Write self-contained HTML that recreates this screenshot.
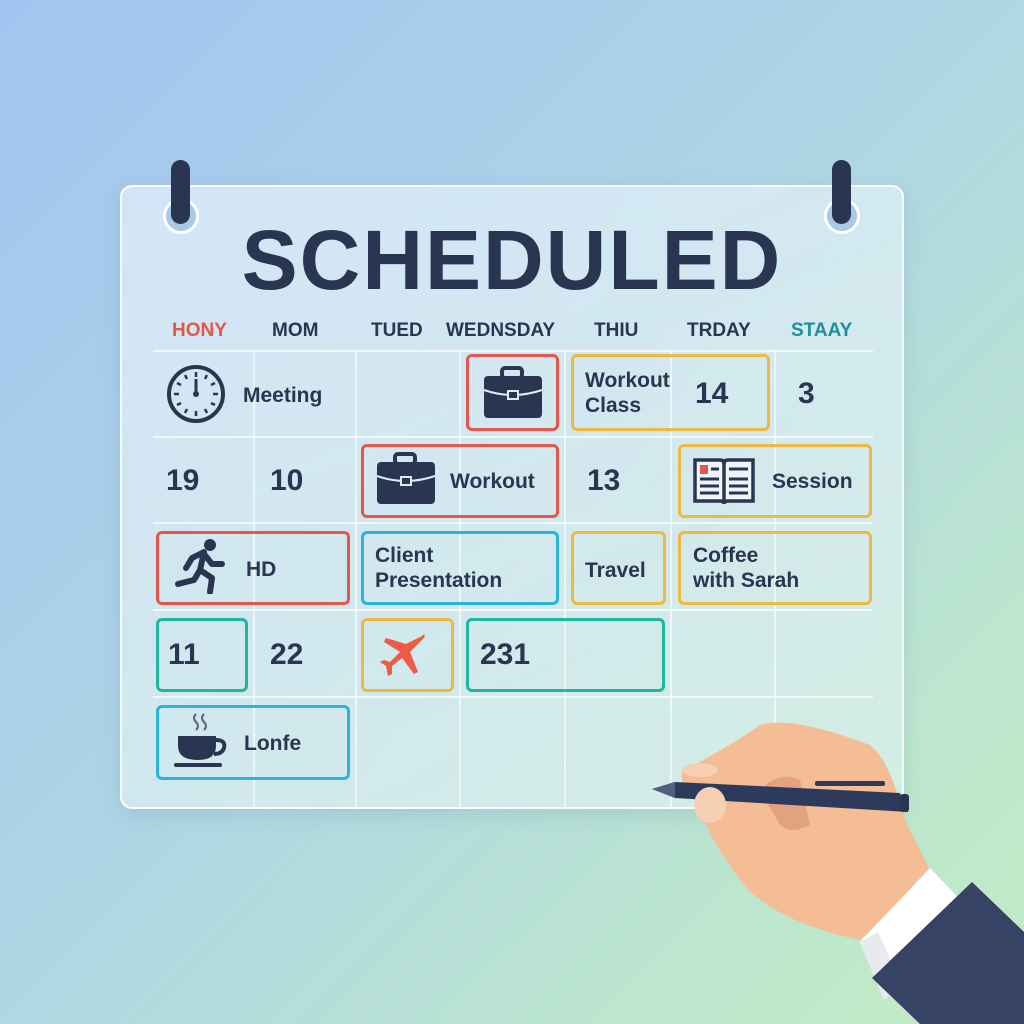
<!DOCTYPE html>
<html><head><meta charset="utf-8"><style>
*{margin:0;padding:0;box-sizing:border-box}
body{width:1024px;height:1024px;overflow:hidden;position:relative;font-family:"Liberation Sans",sans-serif;background:linear-gradient(135deg,#a3c4f0 0%,#aed4e6 45%,#bce6cf 80%,#c2ecc4 100%);color:#27324d}
.card{position:absolute;left:120px;top:185px;width:784px;height:624px;border-radius:12px;background:linear-gradient(160deg,rgba(225,238,250,.75),rgba(220,240,235,.7));border:2px solid rgba(255,255,255,.85);box-shadow:0 6px 20px rgba(60,100,140,.15)}
.ring{position:absolute;width:36px;height:36px;border-radius:50%;border:3px solid #fff;background:#a9c9e6}
.peg{position:absolute;width:19px;height:64px;border-radius:10px;background:#2a3552}
.title{position:absolute;left:0;width:1024px;top:212px;text-align:center;font-size:84px;font-weight:bold;letter-spacing:2px;color:#2a3552}
.day{position:absolute;top:320px;font-size:19px;font-weight:bold;color:#2a3552}
.hl{position:absolute;left:153px;width:720px;height:2px;background:rgba(255,255,255,.7)}
.vl{position:absolute;top:351px;height:458px;width:2px;background:rgba(255,255,255,.6)}
.box{position:absolute;border:3px solid;border-radius:6px}
.r{border-color:#e4574a}.y{border-color:#f0b840}.b{border-color:#28b4dc}.t{border-color:#22b5a0}
.tx{position:absolute;font-size:21px;font-weight:bold;color:#2a3552;line-height:25px}
.num{position:absolute;font-size:30px;font-weight:bold;color:#2a3552}
</style></head><body>
<div class="card"></div>
<div class="ring" style="left:163px;top:198px"></div>
<div class="ring" style="left:824px;top:198px"></div>
<div class="peg" style="left:171px;top:160px"></div>
<div class="peg" style="left:832px;top:160px"></div>
<div class="title">SCHEDULED</div>
<div class="day" style="left:172px;color:#e05a47">HONY</div>
<div class="day" style="left:272px">MOM</div>
<div class="day" style="left:371px">TUED</div>
<div class="day" style="left:446px">WEDNSDAY</div>
<div class="day" style="left:594px">THIU</div>
<div class="day" style="left:687px">TRDAY</div>
<div class="day" style="left:791px;color:#1f8fa0">STAAY</div>
<div class="hl" style="top:350px"></div><div class="hl" style="top:436px"></div><div class="hl" style="top:522px"></div><div class="hl" style="top:609px"></div><div class="hl" style="top:696px"></div>
<div class="vl" style="left:253px"></div><div class="vl" style="left:355px"></div><div class="vl" style="left:459px"></div><div class="vl" style="left:564px"></div><div class="vl" style="left:670px"></div><div class="vl" style="left:774px"></div>

<svg style="position:absolute;left:166px;top:365px" width="62" height="60" viewBox="0 0 62 60"><circle cx="30" cy="29" r="27" fill="none" stroke="#2a3552" stroke-width="4"/><g stroke="#2a3552" stroke-width="2.5"><line x1="30" y1="7" x2="30" y2="12"/><line x1="30" y1="46" x2="30" y2="51"/><line x1="8" y1="29" x2="13" y2="29"/><line x1="47" y1="29" x2="52" y2="29"/><line x1="19" y1="10" x2="21" y2="14"/><line x1="41" y1="10" x2="39" y2="14"/><line x1="11" y1="18" x2="15" y2="20"/><line x1="49" y1="18" x2="45" y2="20"/><line x1="11" y1="40" x2="15" y2="38"/><line x1="49" y1="40" x2="45" y2="38"/><line x1="19" y1="48" x2="21" y2="44"/><line x1="41" y1="48" x2="39" y2="44"/></g><line x1="30" y1="14" x2="30" y2="29" stroke="#2a3552" stroke-width="3"/><circle cx="30" cy="29" r="3" fill="#2a3552"/></svg>
<div class="tx" style="left:243px;top:383px">Meeting</div>

<div class="box r" style="left:466px;top:354px;width:93px;height:77px"></div>
<svg style="position:absolute;left:482px;top:366px" width="62" height="54" viewBox="0 0 62 54"><rect x="20" y="2" width="20" height="10" rx="3" fill="none" stroke="#2a3552" stroke-width="4"/><rect x="2" y="10" width="58" height="42" rx="4" fill="#2a3552"/><path d="M2 24 Q31 34 60 24" stroke="#dfeaf5" stroke-width="2" fill="none"/><rect x="26" y="25" width="10" height="8" fill="#2a3552" stroke="#dfeaf5" stroke-width="2"/></svg>

<div class="box y" style="left:571px;top:354px;width:199px;height:77px"></div>
<div class="tx" style="left:585px;top:368px">Workout<br>Class</div>
<div class="num" style="left:695px;top:377px">14</div>
<div class="num" style="left:798px;top:377px">3</div>

<div class="num" style="left:166px;top:464px">19</div>
<div class="num" style="left:270px;top:464px">10</div>
<div class="box r" style="left:361px;top:444px;width:198px;height:74px"></div>
<svg style="position:absolute;left:375px;top:452px" width="62" height="54" viewBox="0 0 62 54"><rect x="20" y="2" width="20" height="10" rx="3" fill="none" stroke="#2a3552" stroke-width="4"/><rect x="2" y="10" width="58" height="42" rx="4" fill="#2a3552"/><path d="M2 24 Q31 34 60 24" stroke="#dfeaf5" stroke-width="2" fill="none"/><rect x="26" y="25" width="10" height="8" fill="#2a3552" stroke="#dfeaf5" stroke-width="2"/></svg>
<div class="tx" style="left:450px;top:469px">Workout</div>
<div class="num" style="left:587px;top:464px">13</div>
<div class="box y" style="left:678px;top:444px;width:194px;height:74px"></div>
<svg style="position:absolute;left:692px;top:456px" width="64" height="50" viewBox="0 0 64 50"><path d="M3 4 H28 Q32 4 32 8 V48 Q32 45 28 45 H3 Z M61 4 H36 Q32 4 32 8 V48 Q32 45 36 45 H61 Z" fill="#eef4fa" stroke="#2a3552" stroke-width="3.5"/><rect x="8" y="9" width="8" height="9" fill="#e4574a"/><g stroke="#2a3552" stroke-width="3"><line x1="19" y1="13" x2="27" y2="13"/><line x1="8" y1="23" x2="27" y2="23"/><line x1="8" y1="30" x2="27" y2="30"/><line x1="8" y1="37" x2="27" y2="37"/><line x1="37" y1="13" x2="56" y2="13"/><line x1="37" y1="23" x2="56" y2="23"/><line x1="37" y1="30" x2="56" y2="30"/><line x1="37" y1="37" x2="56" y2="37"/></g></svg>
<div class="tx" style="left:772px;top:469px">Session</div>

<div class="box r" style="left:156px;top:531px;width:194px;height:74px"></div>
<svg style="position:absolute;left:174px;top:538px" width="54" height="56" viewBox="0 0 54 56"><circle cx="36" cy="7" r="6" fill="#2a3552"/><path d="M30 14 L18 20 L12 30 M30 14 L26 32 L38 40 L36 54 M26 32 L20 42 L4 46 M30 16 L38 26 L48 26" stroke="#2a3552" stroke-width="6" fill="none" stroke-linecap="round" stroke-linejoin="round"/></svg>
<div class="tx" style="left:246px;top:557px">HD</div>
<div class="box b" style="left:361px;top:531px;width:198px;height:74px"></div>
<div class="tx" style="left:375px;top:543px">Client<br>Presentation</div>
<div class="box y" style="left:571px;top:531px;width:95px;height:74px"></div>
<div class="tx" style="left:585px;top:558px">Travel</div>
<div class="box y" style="left:678px;top:531px;width:194px;height:74px"></div>
<div class="tx" style="left:693px;top:543px">Coffee<br>with Sarah</div>

<div class="box t" style="left:156px;top:618px;width:92px;height:74px"></div>
<div class="num" style="left:168px;top:638px">11</div>
<div class="num" style="left:270px;top:638px">22</div>
<div class="box y" style="left:361px;top:618px;width:93px;height:74px"></div>
<svg style="position:absolute;left:378px;top:630px" width="50" height="50" viewBox="0 0 50 50"><path d="M44 6 Q48 2 46 8 L32 22 L40 42 L36 44 L24 28 L14 36 L14 44 L10 46 L8 36 L2 32 L6 30 L12 32 L22 22 L6 12 L8 8 L28 14 Z" fill="#ec5b45"/></svg>
<div class="box t" style="left:466px;top:618px;width:199px;height:74px"></div>
<div class="num" style="left:480px;top:638px">231</div>

<div class="box b" style="left:156px;top:705px;width:194px;height:75px"></div>
<svg style="position:absolute;left:172px;top:710px" width="58" height="60" viewBox="0 0 58 60"><path d="M24 4 Q20 8 24 12 Q28 16 24 20 M32 4 Q28 8 32 12 Q36 16 32 20" stroke="#5a6680" stroke-width="2" fill="none"/><path d="M6 26 H44 V36 Q44 50 26 50 Q6 50 6 36 Z" fill="#2a3552"/><path d="M44 30 Q54 30 52 38 Q50 44 42 44" stroke="#2a3552" stroke-width="4" fill="none"/><rect x="2" y="53" width="48" height="4" rx="2" fill="#2a3552"/></svg>
<div class="tx" style="left:244px;top:731px">Lonfe</div>

<svg style="position:absolute;left:620px;top:700px" width="404" height="324" viewBox="0 0 404 324">
<path d="M62 72 Q120 40 140 25 Q170 15 250 45 Q270 60 285 120 L310 170 L240 240 Q150 220 120 180 Q90 140 75 100 Q60 90 62 72 Z" fill="#f4bd96"/>
<path d="M140 90 Q160 70 180 80 L190 125 Q170 135 160 125 Z" fill="#e2a27e"/>
<path d="M310 168 L350 210 L264 300 L240 242 Z" fill="#fff"/>
<path d="M240 242 L264 300 L282 285 L258 232 Z" fill="#e8eaee"/>
<path d="M352 182 L404 232 L404 324 L300 324 L252 278 Z" fill="#364364"/>
<path d="M32 89 L55 82 L280 93 L288 112 L55 98 Z" fill="#2e3a5c"/>
<path d="M32 89 L55 82 L55 98 Z" fill="#52607e"/>
<rect x="195" y="81" width="70" height="5" rx="2" fill="#2e3a5c"/>
<rect x="280" y="94" width="9" height="18" rx="3" fill="#2a3552"/>
<ellipse cx="90" cy="105" rx="16" ry="18" fill="#f7cfb3"/>
<ellipse cx="80" cy="70" rx="18" ry="7" fill="#f7cfb3"/>
</svg>
</body></html>
